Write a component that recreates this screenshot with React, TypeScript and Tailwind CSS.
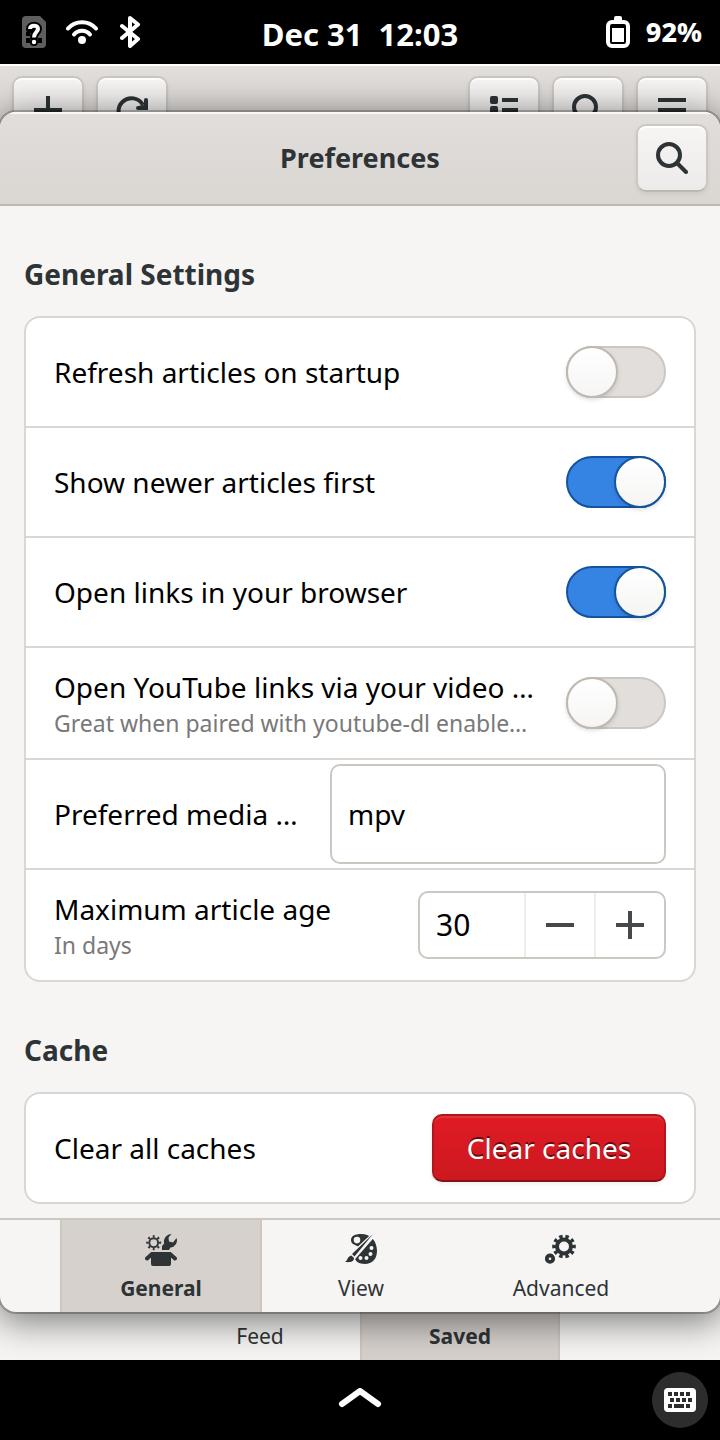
import { useState, type ReactNode } from "react";

const headerButton =
  "flex h-[68px] w-[72px] items-center justify-center rounded-[10px] border-2 border-[#cdc7c2] border-b-[#bfb8b1] bg-linear-to-b from-[#f6f5f4] to-[#edebe9] text-[#2e3436] shadow-[inset_0_2px_0_#ffffff,0_2px_4px_rgba(0,0,0,0.07)]";

function Icon({ children, className = "h-8 w-8" }: { children: ReactNode; className?: string }) {
  return (
    <svg viewBox="0 0 32 32" className={className} fill="currentColor" aria-hidden="true">
      {children}
    </svg>
  );
}

function SearchIcon() {
  return (
    <Icon>
      <circle cx="13" cy="13" r="11" fill="none" stroke="currentColor" strokeWidth="4" />
      <path d="M21 21l9 9" stroke="currentColor" strokeWidth="4" strokeLinecap="round" />
    </Icon>
  );
}

function StatusBar() {
  return (
    <header className="grid h-16 grid-cols-[1fr_auto_1fr] items-center bg-black px-[18px] text-white">
      <div className="flex items-center gap-4">
        <Icon>
          <path d="M8 0h14l6 6v22a4 4 0 0 1-4 4H8a4 4 0 0 1-4-4V4a4 4 0 0 1 4-4z" fill="#5e5e5e" />
          <path d="M8 16h4v4H8zM8 22h4v5H8zM20 22h4v5h-4z" fill="#000" />
          <path d="M12 13c0-4.500 8-4.500 8 0 0 3-4 3-4 8" fill="none" stroke="#000" strokeWidth="8" strokeLinecap="round" />
          <circle cx="16" cy="26" r="4" fill="#000" />
          <path d="M12 13c0-4.500 8-4.500 8 0 0 3-4 3-4 8.500" fill="none" stroke="#fff" strokeWidth="4" />
          <circle cx="16" cy="26" r="2.200" />
        </Icon>
        <Icon>
          <g fill="none" stroke="currentColor" strokeWidth="4" strokeLinecap="round">
            <path d="M2 12.500C9 4 23 4 30 12.500" />
            <path d="M8 18.500c4-5 12-5 16 0" />
          </g>
          <circle cx="16" cy="24" r="4" />
        </Icon>
        <Icon>
          <path d="M8 10l16 13-8 7V2l8 6.500L8 22" fill="none" stroke="currentColor" strokeWidth="4" strokeLinejoin="round" strokeLinecap="round" />
        </Icon>
      </div>
      <time className="pt-1 text-[31px] leading-10 font-bold whitespace-pre">{"Dec 31  12:03"}</time>
      <div className="flex items-center justify-end gap-3">
        <Icon>
          <path d="M12 2a2 2 0 0 1 2-2h4a2 2 0 0 1 2 2v4h-8z" />
          <rect x="6" y="6" width="20" height="24" rx="4" fill="none" stroke="currentColor" strokeWidth="4" />
          <path d="M10 12h12v14H10z" />
        </Icon>
        <span className="text-[27px] leading-8 font-extrabold">92%</span>
      </div>
    </header>
  );
}

function MainWindow() {
  return (
    <div className="absolute inset-0 flex flex-col justify-between bg-[#f6f5f4]">
      <div className="flex h-24 justify-between border-t-2 border-white bg-linear-to-b from-[#e1dedb] to-[#dad6d2] px-3 pt-[10px]">
        <div className="flex gap-3">
          <button aria-label="Add feed" className={headerButton}>
            <Icon>
              <path d="M2 14h12V2h4v12h12v4H18v12h-4V18H2z" />
            </Icon>
          </button>
          <button aria-label="Refresh" className={headerButton}>
            <Icon>
              <path d="M27 11A13 13 0 1 0 28 21" fill="none" stroke="currentColor" strokeWidth="4" />
              <path d="M28 6a2 2 0 0 1 4 0v10H22a2 2 0 0 1 0-4l6-1z" />
            </Icon>
          </button>
        </div>
        <div className="flex gap-3">
          <button aria-label="Filter" className={headerButton}>
            <Icon>
              <rect x="2" y="2" width="8" height="8" rx="2" />
              <rect x="2" y="12" width="8" height="8" rx="2" />
              <rect x="2" y="22" width="8" height="8" rx="2" />
              <path d="M14 4h16v4H14zM14 14h16v4H14zM14 24h16v4H14z" />
            </Icon>
          </button>
          <button aria-label="Search articles" className={headerButton}>
            <SearchIcon />
          </button>
          <button aria-label="Menu" className={headerButton}>
            <Icon>
              <path d="M2 4h28v4H2zM2 14h28v4H2zM2 24h28v4H2z" />
            </Icon>
          </button>
        </div>
      </div>
      <nav className="flex h-24 justify-center text-[21px] leading-7 text-[#2e3436]">
        <button className="flex w-[200px] items-end justify-center pb-[10px]">Feed</button>
        <button className="flex w-[200px] items-end justify-center border-x-2 border-[#cdc7c2] bg-[#d6d1cd] pb-[10px] font-bold">
          Saved
        </button>
      </nav>
    </div>
  );
}

function Row({
  title,
  subtitle,
  htmlFor,
  children,
}: {
  title: string;
  subtitle?: string;
  htmlFor?: string;
  children: ReactNode;
}) {
  return (
    <div
      className={`box-content flex items-center justify-between gap-6 px-7 ${subtitle ? "h-[110px]" : "h-[108px]"}`}
    >
      <label htmlFor={htmlFor} className="min-w-0 whitespace-nowrap">
        <span className="block text-[28px] leading-10 text-black">{title}</span>
        {subtitle && <span className="block text-[23px] leading-8 text-[#797979]">{subtitle}</span>}
      </label>
      {children}
    </div>
  );
}

function SwitchRow({
  id,
  title,
  subtitle,
  initial = false,
}: {
  id: string;
  title: string;
  subtitle?: string;
  initial?: boolean;
}) {
  const [on, setOn] = useState(initial);
  return (
    <Row title={title} subtitle={subtitle} htmlFor={id}>
      <input
        id={id}
        type="checkbox"
        role="switch"
        checked={on}
        onChange={(e) => setOn(e.target.checked)}
        className="flex h-[52px] w-[100px] shrink-0 appearance-none rounded-full border-2 border-[#cdc7c2] bg-[#e1dedb] before:-m-0.5 before:h-[52px] before:w-[52px] before:rounded-full before:border-2 before:border-[#bfb8b1] before:bg-linear-to-b before:from-white before:to-[#f6f5f4] before:shadow-[0_2px_4px_rgba(0,0,0,0.12)] before:content-[''] checked:justify-end checked:border-[#15539e] checked:bg-[#3584e4] checked:before:border-[#15539e]"
      />
    </Row>
  );
}

function Group({ title, children }: { title: string; children: ReactNode }) {
  return (
    <section>
      <h2 className="text-[28px] leading-10 font-bold text-[#2e3436]">{title}</h2>
      <div className="mt-[22px] divide-y-2 divide-[#dad6d3] rounded-2xl border-2 border-[#dad6d3] bg-white">
        {children}
      </div>
    </section>
  );
}

function GeneralIcon() {
  return (
    <Icon>
      <g fill="none" stroke="currentColor">
        <circle cx="8.700" cy="8.700" r="4.400" strokeWidth="1.900" />
        <circle cx="8.700" cy="8.700" r="6.300" strokeWidth="2.400" pathLength="80" strokeDasharray="4 6" strokeDashoffset="2" />
      </g>
      <path d="M26.500 0a7.500 7.500 0 0 0-7.300 9.500L17 12v4h7l1.500-2.600A7 7 0 0 0 31.500 4L28 8.500l-4-1-.5-4z" />
      <path d="M6 18h20v12a2 2 0 0 1-2 2H8a2 2 0 0 1-2-2z" />
      <path d="M7 20l-5 4.500M25 20l5 4.500" stroke="currentColor" strokeWidth="4" strokeLinecap="round" />
    </Icon>
  );
}

function ViewIcon() {
  return (
    <Icon>
      <path
        fillRule="evenodd"
        d="M16 0C26 0 32 7 32 17c0 8-5 13-12 13-6 0-10-3-10-6 0-4 4-5 4-9 0-3-2-3-4-4-3-1-4-3-4-5 0-4 4-6 10-6zM12 2.800a3.300 3.300 0 1 0 0 6.600 3.300 3.300 0 0 0 0-6.600zM26.500 12a2 2 0 1 0 0 4 2 2 0 0 0 0-4zM25.500 18a2 2 0 1 0 0 4 2 2 0 0 0 0-4zM21.500 22a2 2 0 1 0 0 4 2 2 0 0 0 0-4zM15.500 22a2 2 0 1 0 0 4 2 2 0 0 0 0-4z"
      />
      <path d="M28.500 0L7 20l2 4L28.500 2z" fill="#f6f5f4" stroke="#f6f5f4" strokeWidth="3" />
      <path d="M28 0L7 20l2.500 2.500zM6.500 21.500L9 24c0 4-4 4.500-9 4 3-1.500 2-5.500 6.500-6.500z" />
    </Icon>
  );
}

function AdvancedIcon() {
  return (
    <Icon>
      <g fill="none" stroke="currentColor">
        <circle cx="19" cy="12.500" r="7" strokeWidth="4" />
        <circle cx="19" cy="12.500" r="9.800" strokeWidth="4" pathLength="100" strokeDasharray="5.500 4.500" strokeDashoffset="2.750" />
        <circle cx="5" cy="24.700" r="3.200" strokeWidth="3.800" />
      </g>
    </Icon>
  );
}

const tabs = [
  { name: "General", icon: <GeneralIcon /> },
  { name: "View", icon: <ViewIcon /> },
  { name: "Advanced", icon: <AdvancedIcon /> },
];

function Preferences() {
  const [age, setAge] = useState(30);
  const [player, setPlayer] = useState("mpv");
  const [tab, setTab] = useState("General");

  return (
    <main
      role="dialog"
      aria-labelledby="dialog-title"
      className="relative my-12 flex flex-1 flex-col overflow-hidden rounded-2xl bg-[#f6f5f4] shadow-[0_6px_36px_4px_rgba(0,0,0,0.5),0_0_0_2px_rgba(0,0,0,0.23)]"
    >
      <div className="grid h-[94px] grid-cols-[1fr_auto_1fr] items-center border-b-2 border-b-[#bfb8b1] bg-linear-to-b from-[#e1dedb] to-[#dad6d2] px-3 shadow-[inset_0_2px_0_#f9f8f8]">
        <h1 id="dialog-title" className="col-start-2 text-[27px] leading-10 font-bold text-[#2e3436]">
          Preferences
        </h1>
        <button aria-label="Search preferences" className={`${headerButton} justify-self-end`}>
          <SearchIcon />
        </button>
      </div>

      <div className="flex flex-1 flex-col gap-12 px-6 pt-12 pb-[14px]">
        <Group title="General Settings">
          <SwitchRow id="refresh" title="Refresh articles on startup" />
          <SwitchRow id="newer" title="Show newer articles first" initial />
          <SwitchRow id="links" title="Open links in your browser" initial />
          <SwitchRow
            id="youtube"
            title="Open YouTube links via your video …"
            subtitle="Great when paired with youtube-dl enable…"
          />
          <Row title="Preferred media …" htmlFor="player">
            <input
              id="player"
              type="text"
              value={player}
              onChange={(e) => setPlayer(e.target.value)}
              className="h-[100px] w-[336px] rounded-[10px] border-2 border-[#cdc7c2] bg-white px-4 text-[28px] leading-10 text-black"
            />
          </Row>
          <Row title="Maximum article age" subtitle="In days" htmlFor="age">
            <div className="flex h-[68px] w-[248px] shrink-0 rounded-[10px] border-2 border-[#cdc7c2] text-[#45494b]">
              <input
                id="age"
                type="text"
                inputMode="numeric"
                value={age}
                onChange={(e) => setAge(Number(e.target.value) || 0)}
                className="min-w-0 flex-1 bg-transparent px-4 text-[30px] leading-10 text-black"
              />
              <button
                aria-label="Decrease"
                onClick={() => setAge(age - 1)}
                className="flex w-[70px] items-center justify-center border-l-2 border-[#eeedec]"
              >
                <Icon>
                  <path d="M2 14h28v4H2z" />
                </Icon>
              </button>
              <button
                aria-label="Increase"
                onClick={() => setAge(age + 1)}
                className="flex w-[70px] items-center justify-center border-l-2 border-[#eeedec]"
              >
                <Icon>
                  <path d="M2 14h12V2h4v12h12v4H18v12h-4V18H2z" />
                </Icon>
              </button>
            </div>
          </Row>
        </Group>

        <Group title="Cache">
          <Row title="Clear all caches" htmlFor="clear">
            <button
              id="clear"
              className="h-[68px] w-[234px] shrink-0 rounded-[10px] border-2 border-[#b2161d] border-b-[#851015] bg-linear-to-b from-[#e01b24] to-[#cc1820] text-[28px] leading-10 text-white shadow-[inset_0_2px_0_rgba(255,255,255,0.1),0_2px_4px_rgba(0,0,0,0.07)] [text-shadow:0_-2px_0_rgba(0,0,0,0.55)]"
            >
              Clear caches
            </button>
          </Row>
        </Group>
      </div>

      <nav className="flex h-[94px] justify-center border-t-2 border-[#cdc7c2] text-[#2e3436]">
        {tabs.map(({ name, icon }) => (
          <button
            key={name}
            onClick={() => setTab(name)}
            className={`-mr-0.5 flex w-[202px] flex-col items-center justify-center gap-2 border-x-2 pt-1 text-[21px] leading-7 ${
              name === tab ? "border-[#cdc7c2] bg-[#d6d1cd] font-bold" : "border-transparent"
            }`}
          >
            {icon}
            {name}
          </button>
        ))}
      </nav>
    </main>
  );
}

function HomeBar() {
  return (
    <footer className="grid h-20 grid-cols-[1fr_auto_1fr] items-center bg-black px-3 text-white">
      <button aria-label="Show overview" className="col-start-2">
        <svg viewBox="0 0 44 24" className="h-6 w-11" aria-hidden="true">
          <path d="M4 16L22 3l18 13" fill="none" stroke="currentColor" strokeWidth="6" strokeLinecap="round" strokeLinejoin="round" />
        </svg>
      </button>
      <button
        aria-label="Show keyboard"
        className="flex h-14 w-14 items-center justify-center justify-self-end rounded-full bg-[#2d2d2d]"
      >
        <Icon>
          <rect y="4" width="32" height="24" rx="4" />
          <g fill="#2d2d2d">
            <path d="M4 8h4v4H4zM10 8h4v4h-4zM16 8h4v4h-4zM22 8h4v4h-4z" />
            <path d="M6 14h4v4H6zM12 14h4v4h-4zM18 14h4v4h-4zM24 14h4v4h-4z" />
            <path d="M4 20h4v4H4zM10 20h10v4H10zM22 20h4v4h-4z" />
          </g>
        </Icon>
      </button>
    </footer>
  );
}

export default function App() {
  return (
    <div className="flex min-h-screen flex-col bg-black font-['Noto_Sans',sans-serif]">
      <StatusBar />
      <div className="relative flex flex-1 flex-col overflow-hidden">
        <MainWindow />
        <Preferences />
      </div>
      <HomeBar />
    </div>
  );
}
